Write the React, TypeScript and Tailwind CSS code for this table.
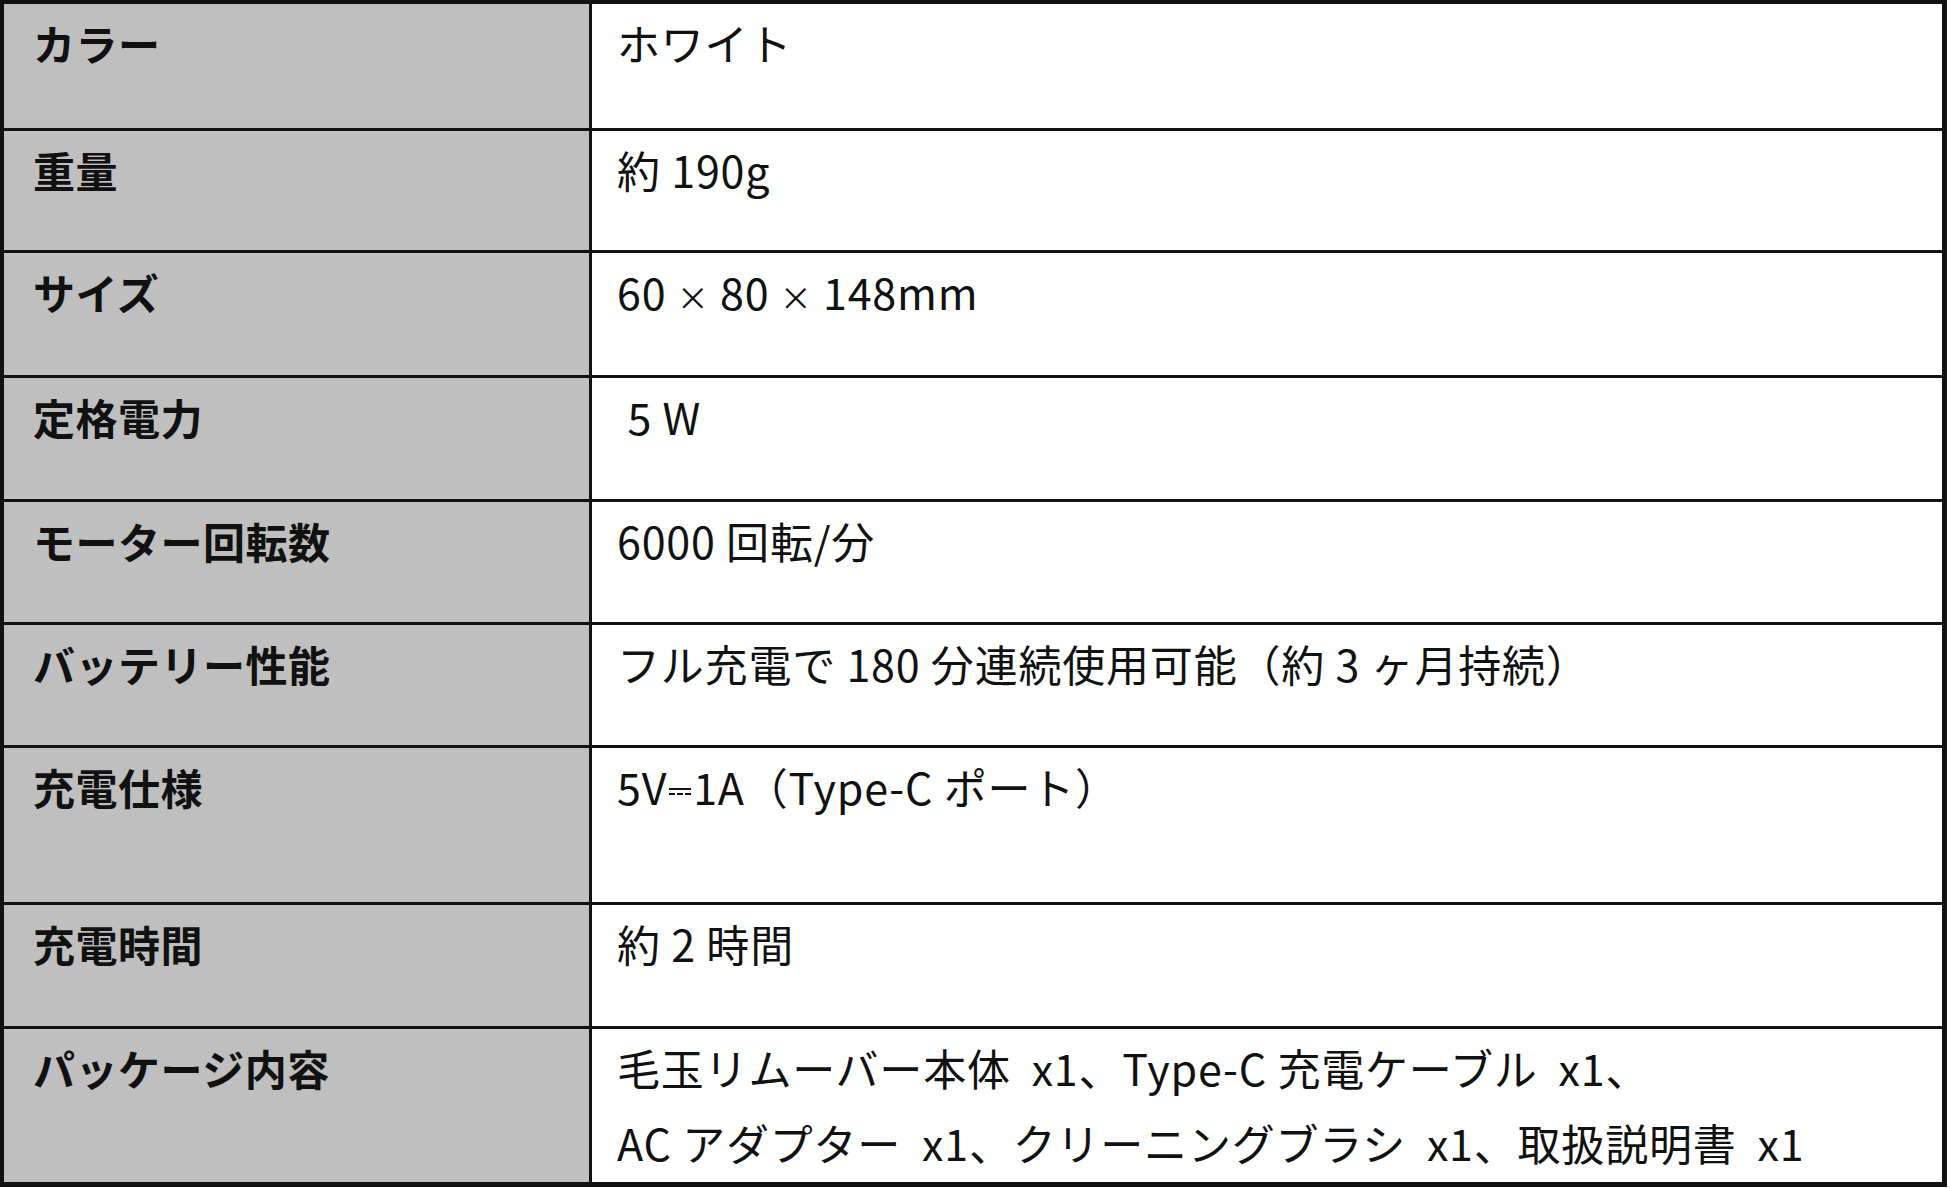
import React from 'react'

type Spec = { label: string; value: React.ReactNode; h: string }

// DC 記号（実線＋破線）
function DcMark() {
  return (
    <span className="inline-flex flex-col justify-center gap-[3px] w-[22px] mx-[2px] align-middle -translate-y-[2px]">
      <span className="block h-[2px] bg-[#111]" />
      <span className="block h-0 border-t-[2px] border-dashed border-[#111]" />
    </span>
  )
}

const Times = () => <span className="text-[32px]">×</span>

const SPECS: Spec[] = [
  { label: 'カラー', value: 'ホワイト', h: 'h-[127px]' },
  { label: '重量', value: '約 190g', h: 'h-[122px]' },
  {
    label: 'サイズ',
    value: (
      <>
        60 <Times /> 80 <Times /> 148mm
      </>
    ),
    h: 'h-[125px]',
  },
  { label: '定格電力', value: '\u00a05 W', h: 'h-[124px]' },
  { label: 'モーター回転数', value: '6000 回転/分', h: 'h-[123px]' },
  { label: 'バッテリー性能', value: 'フル充電で 180 分連続使用可能（約 3 ヶ月持続）', h: 'h-[123px]' },
  {
    label: '充電仕様',
    value: (
      <>
        5V<DcMark />1A（Type-C ポート）
      </>
    ),
    h: 'h-[157px]',
  },
  { label: '充電時間', value: '約 2 時間', h: 'h-[124px]' },
  {
    label: 'パッケージ内容',
    value: (
      <>
        <div>毛玉リムーバー本体&nbsp;&nbsp;x1、Type-C 充電ケーブル&nbsp;&nbsp;x1、</div>
        <div>AC アダプター&nbsp;&nbsp;x1、クリーニングブラシ&nbsp;&nbsp;x1、取扱説明書&nbsp;&nbsp;x1</div>
      </>
    ),
    h: 'h-[153px]',
  },
]

export default function App() {
  return (
    <div className="w-[1950px] h-[1188px] bg-white text-[#111] font-['Noto_Sans_CJK_JP','Noto_Sans',sans-serif]">
      <div className="w-[1947px] h-[1187px] border-[#111] border-t-[4px] border-l-[4px] border-r-[5px] border-b-[5px] flex flex-col">
        {SPECS.map((s, i) => (
          <div
            key={s.label}
            className={`flex ${s.h} ${i < SPECS.length - 1 ? 'border-b-[3px] border-[#111]' : ''}`}
          >
            <div className="w-[588px] shrink-0 bg-[#bfbfbf] border-r-[3px] border-[#111] pl-[29px] pt-[1px] text-[42px] leading-[75px] font-bold tracking-[0.5px]">
              {s.label}
            </div>
            <div className="flex-1 pl-[25px] pt-[1px] text-[43px] leading-[75px] tracking-[0.8px]">
              {s.value}
            </div>
          </div>
        ))}
      </div>
    </div>
  )
}
